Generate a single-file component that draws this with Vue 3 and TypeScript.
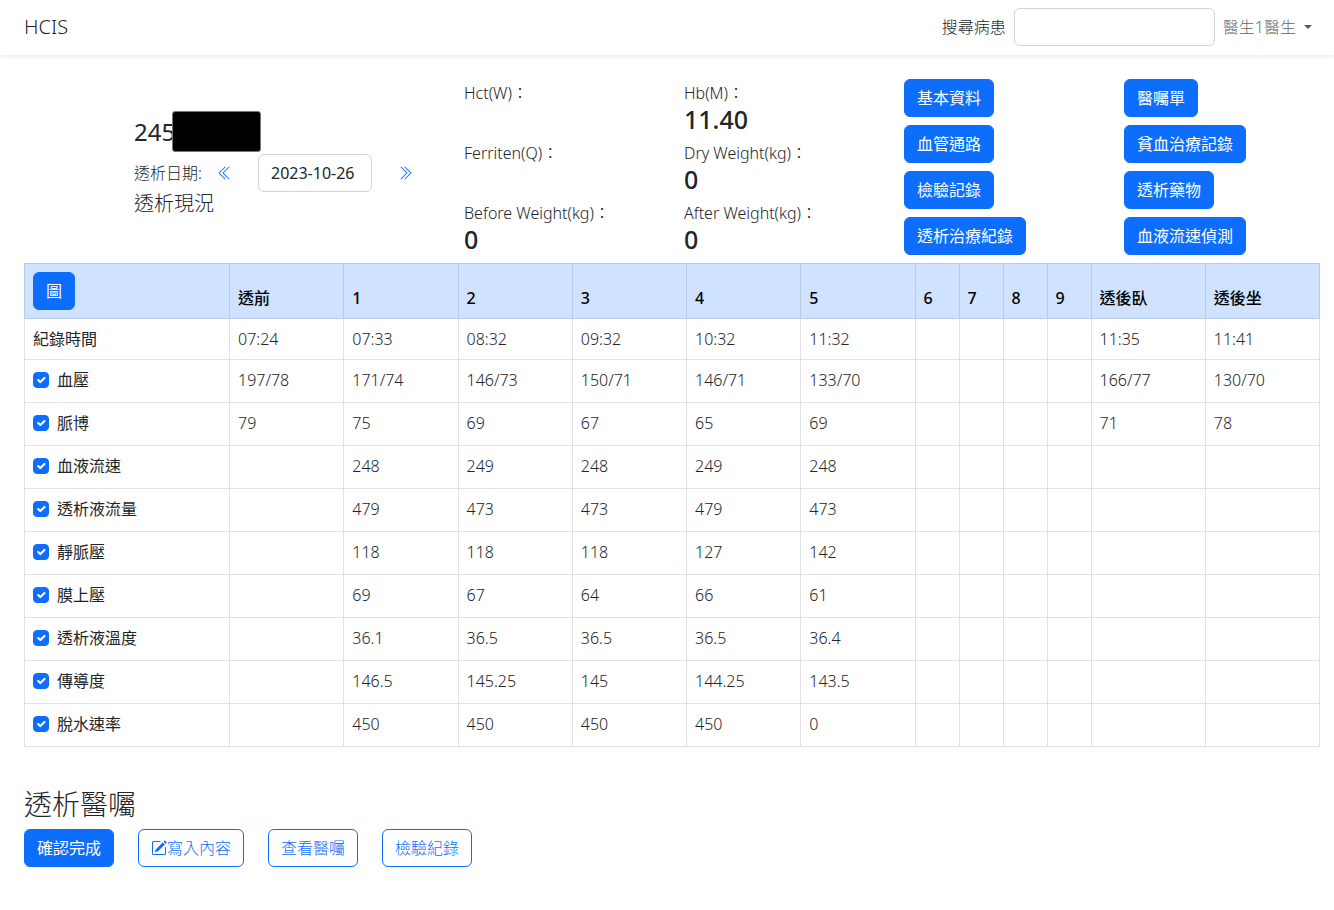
<script setup lang="ts">
import { ref } from 'vue'

interface Metric {
  label: string
  value: string
}

interface Row {
  label: string
  checked: boolean
  values: string[]
}

const patientNo = '245'
const keyword = ref('')
const sessionDate = ref('2023-10-26')

const metricColumns: Metric[][] = [
  [
    { label: 'Hct(W)：', value: '' },
    { label: 'Ferriten(Q)：', value: '' },
    { label: 'Before Weight(kg)：', value: '0' },
  ],
  [
    { label: 'Hb(M)：', value: '11.40' },
    { label: 'Dry Weight(kg)：', value: '0' },
    { label: 'After Weight(kg)：', value: '0' },
  ],
]

const linkColumns: string[][] = [
  ['基本資料', '血管通路', '檢驗記錄', '透析治療紀錄'],
  ['醫囑單', '貧血治療記錄', '透析藥物', '血液流速偵測'],
]

const columns: string[] = ['透前', '1', '2', '3', '4', '5', '6', '7', '8', '9', '透後臥', '透後坐']
const narrow = new Set(['6', '7', '8', '9'])
const blank = ['', '', '', '']

const times: string[] = ['07:24', '07:33', '08:32', '09:32', '10:32', '11:32', ...blank, '11:35', '11:41']

const rows = ref<Row[]>([
  { label: '血壓', checked: true, values: ['197/78', '171/74', '146/73', '150/71', '146/71', '133/70', ...blank, '166/77', '130/70'] },
  { label: '脈博', checked: true, values: ['79', '75', '69', '67', '65', '69', ...blank, '71', '78'] },
  { label: '血液流速', checked: true, values: ['', '248', '249', '248', '249', '248', ...blank, '', ''] },
  { label: '透析液流量', checked: true, values: ['', '479', '473', '473', '479', '473', ...blank, '', ''] },
  { label: '靜脈壓', checked: true, values: ['', '118', '118', '118', '127', '142', ...blank, '', ''] },
  { label: '膜上壓', checked: true, values: ['', '69', '67', '64', '66', '61', ...blank, '', ''] },
  { label: '透析液溫度', checked: true, values: ['', '36.1', '36.5', '36.5', '36.5', '36.4', ...blank, '', ''] },
  { label: '傳導度', checked: true, values: ['', '146.5', '145.25', '145', '144.25', '143.5', ...blank, '', ''] },
  { label: '脫水速率', checked: true, values: ['', '450', '450', '450', '450', '0', ...blank, '', ''] },
])

function shiftDate(days: number): void {
  const d = new Date(sessionDate.value + 'T00:00:00Z')
  d.setUTCDate(d.getUTCDate() + days)
  sessionDate.value = d.toISOString().slice(0, 10)
}
</script>

<template>
  <div class="page">
    <header class="navbar">
      <a class="brand" href="#">HCIS</a>
      <div class="nav-right">
        <label class="search-label" for="search">搜尋病患</label>
        <input id="search" v-model="keyword" class="control search" type="text" />
        <button class="user-menu" type="button">醫生1醫生<span class="caret"></span></button>
      </div>
    </header>

    <main>
      <section class="summary">
        <div class="patient">
          <h4 class="patient-id">{{ patientNo }}<span class="mask"></span></h4>
          <div class="date-row">
            <label class="date-label" for="session-date">透析日期:</label>
            <button class="step" type="button" aria-label="前一次" @click="shiftDate(-1)">
              <svg width="16" height="16" viewBox="0 0 16 16" fill="currentColor">
                <path fill-rule="evenodd" d="M8.354 1.646a.5.5 0 0 1 0 .708L2.707 8l5.647 5.646a.5.5 0 0 1-.708.708l-6-6a.5.5 0 0 1 0-.708l6-6a.5.5 0 0 1 .708 0z" />
                <path fill-rule="evenodd" d="M12.354 1.646a.5.5 0 0 1 0 .708L6.707 8l5.647 5.646a.5.5 0 0 1-.708.708l-6-6a.5.5 0 0 1 0-.708l6-6a.5.5 0 0 1 .708 0z" />
              </svg>
            </button>
            <input id="session-date" v-model="sessionDate" class="control date" type="text" />
            <button class="step" type="button" aria-label="後一次" @click="shiftDate(1)">
              <svg width="16" height="16" viewBox="0 0 16 16" fill="currentColor">
                <path fill-rule="evenodd" d="M3.646 1.646a.5.5 0 0 1 .708 0l6 6a.5.5 0 0 1 0 .708l-6 6a.5.5 0 0 1-.708-.708L9.293 8 3.646 2.354a.5.5 0 0 1 0-.708z" />
                <path fill-rule="evenodd" d="M7.646 1.646a.5.5 0 0 1 .708 0l6 6a.5.5 0 0 1 0 .708l-6 6a.5.5 0 0 1-.708-.708L13.293 8 7.646 2.354a.5.5 0 0 1 0-.708z" />
              </svg>
            </button>
          </div>
          <h5 class="status">透析現況</h5>
        </div>

        <div v-for="(col, i) in metricColumns" :key="'m' + i" class="metrics">
          <div v-for="m in col" :key="m.label" class="metric">
            <div class="metric-label">{{ m.label }}</div>
            <div class="metric-value">{{ m.value }}</div>
          </div>
        </div>

        <div v-for="(col, i) in linkColumns" :key="'l' + i" class="links">
          <button v-for="name in col" :key="name" class="btn primary" type="button">{{ name }}</button>
        </div>
      </section>

      <div class="content">
        <table class="records">
          <colgroup>
            <col class="c-name" />
            <col v-for="c in columns" :key="c" :class="{ 'c-narrow': narrow.has(c) }" />
          </colgroup>
          <thead>
            <tr>
              <th><button class="btn primary" type="button">圖</button></th>
              <th v-for="c in columns" :key="c" scope="col">{{ c }}</th>
            </tr>
          </thead>
          <tbody>
            <tr>
              <td class="name">紀錄時間</td>
              <td v-for="(t, i) in times" :key="i">{{ t }}</td>
            </tr>
            <tr v-for="row in rows" :key="row.label">
              <td class="name">
                <label class="check">
                  <input v-model="row.checked" type="checkbox" />
                  <span>{{ row.label }}</span>
                </label>
              </td>
              <td v-for="(v, i) in row.values" :key="i">{{ v }}</td>
            </tr>
          </tbody>
        </table>

        <h3 class="orders-title">透析醫囑</h3>
        <div class="orders">
          <button class="btn primary" type="button">確認完成</button>
          <button class="btn outline" type="button">
            <svg width="16" height="16" viewBox="0 0 16 16" fill="currentColor">
              <path d="M15.502 1.94a.5.5 0 0 1 0 .706L14.459 3.69l-2-2L13.502.646a.5.5 0 0 1 .707 0l1.293 1.293zm-1.75 2.456-2-2L4.939 9.21a.5.5 0 0 0-.121.196l-.805 2.414a.25.25 0 0 0 .316.316l2.414-.805a.5.5 0 0 0 .196-.12l6.813-6.814z" />
              <path fill-rule="evenodd" d="M1 13.5A1.5 1.5 0 0 0 2.5 15h11a1.5 1.5 0 0 0 1.5-1.5v-6a.5.5 0 0 0-1 0v6a.5.5 0 0 1-.5.5h-11a.5.5 0 0 1-.5-.5v-11a.5.5 0 0 1 .5-.5H9a.5.5 0 0 0 0-1H2.5A1.5 1.5 0 0 0 1 2.5v11z" />
            </svg>寫入內容
          </button>
          <button class="btn outline" type="button">查看醫囑</button>
          <button class="btn outline" type="button">檢驗紀錄</button>
        </div>
      </div>
    </main>
  </div>
</template>

<style>
body {
  margin: 0;
  background: #fff;
}
</style>

<style scoped>
.page {
  font-family: 'Noto Sans', 'Noto Sans CJK TC', sans-serif;
  font-size: 16px;
  font-weight: 300;
  line-height: 24px;
  color: #212529;
}

.page *,
.page *::before,
.page *::after {
  box-sizing: border-box;
}

button,
input {
  font: inherit;
  color: inherit;
  margin: 0;
}

button {
  cursor: pointer;
}

.navbar {
  display: flex;
  align-items: center;
  justify-content: space-between;
  padding: 8px 14px 9px 24px;
  box-shadow: 0 2px 4px rgba(0, 0, 0, 0.075);
}

.brand {
  font-size: 20px;
  line-height: 30px;
  color: rgba(0, 0, 0, 0.9);
  text-decoration: none;
}

.nav-right {
  display: flex;
  align-items: center;
}

.search-label {
  margin-right: 8px;
}

.control {
  height: 38px;
  padding: 6px 12px;
  border: 1px solid #ced4da;
  border-radius: 6px;
  background: #fff;
}

.search {
  width: 201px;
}

.user-menu {
  display: flex;
  align-items: center;
  gap: 8px;
  height: 38px;
  padding: 0 8px;
  border: 0;
  background: none;
  color: rgba(0, 0, 0, 0.65);
}

.caret {
  border-top: 4px solid currentColor;
  border-left: 4px solid transparent;
  border-right: 4px solid transparent;
}

.summary {
  display: grid;
  grid-template-columns: 33fr 22fr 22fr 22fr 21fr;
  padding: 24px 0 8px 134px;
}

.patient {
  padding-top: 39px;
}

.patient-id {
  position: relative;
  margin: 0 0 8px;
  font-size: 24px;
  font-weight: 400;
  line-height: 28px;
}

.mask {
  position: absolute;
  left: 38px;
  top: -7px;
  width: 89px;
  height: 41px;
  border: 1px solid #777;
  border-radius: 3px;
  background: #000;
}

.date-row {
  display: flex;
  align-items: center;
  gap: 12px;
}

.date-label {
  width: 58px;
  white-space: nowrap;
}

.date {
  width: 114px;
  padding: 6px 12px;
  font-weight: 400;
}

.step {
  display: flex;
  justify-content: center;
  width: 42px;
  padding: 7px 0;
  border: 0;
  background: none;
  color: #0d6efd;
}

.status {
  margin: 0;
  font-size: 20px;
  font-weight: 300;
  line-height: 24px;
}

.metrics {
  display: flex;
  flex-direction: column;
  gap: 8px;
  padding-top: 2px;
}

.metric-label {
  white-space: nowrap;
}

.metric-value {
  height: 28px;
  font-size: 25px;
  font-weight: 500;
  line-height: 28px;
}

.metric:last-child .metric-value {
  margin-bottom: -8px;
}

.links {
  display: flex;
  flex-direction: column;
  align-items: flex-start;
  gap: 8px;
}

.btn {
  display: inline-flex;
  align-items: center;
  height: 38px;
  padding: 0 12px;
  border: 1px solid #0d6efd;
  border-radius: 6px;
  white-space: nowrap;
}

.primary {
  background: #0d6efd;
  color: #fff;
  font-weight: 400;
}

.outline {
  background: #fff;
  color: #0d6efd;
}

.content {
  padding: 0 14px 32px 24px;
}

.records {
  width: 100%;
  table-layout: fixed;
  border-collapse: collapse;
}

.c-name {
  width: 205px;
}

.c-narrow {
  width: 44px;
}

.records th,
.records td {
  padding: 8px;
  border: 1px solid #dee2e6;
  text-align: left;
  vertical-align: top;
}

.records th {
  border-color: #bacbe6;
  background: #cfe2ff;
  color: #000;
  font-weight: 500;
  vertical-align: bottom;
}

.records th .btn {
  display: flex;
}

.records .name {
  font-weight: 400;
}

.check {
  display: flex;
  align-items: flex-start;
  gap: 8px;
  min-height: 26px;
}

.check input {
  appearance: none;
  width: 16px;
  height: 16px;
  margin-top: 4px;
  border: 1px solid #adb5bd;
  border-radius: 4px;
  background: #fff;
}

.check input:checked {
  border-color: #0d6efd;
  background: #0d6efd url("data:image/svg+xml,%3csvg xmlns='http://www.w3.org/2000/svg' viewBox='0 0 20 20'%3e%3cpath fill='none' stroke='%23fff' stroke-linecap='round' stroke-linejoin='round' stroke-width='3' d='m6 10 3 3 6-6'/%3e%3c/svg%3e") center / contain no-repeat;
}

.orders-title {
  margin: 40px 0 8px;
  font-size: 28px;
  font-weight: 300;
  line-height: 34px;
}

.orders {
  display: flex;
  gap: 24px;
}
</style>
